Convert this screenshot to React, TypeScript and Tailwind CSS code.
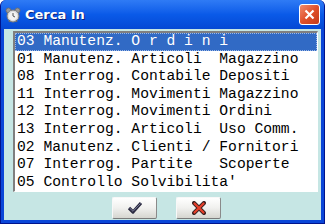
import React from 'react';

const rows = [
  '03 Manutenz. O r d i n i',
  '01 Manutenz. Articoli  Magazzino',
  '08 Interrog. Contabile Depositi',
  '11 Interrog. Movimenti Magazzino',
  '12 Interrog. Movimenti Ordini',
  '13 Interrog. Articoli  Uso Comm.',
  '02 Manutenz. Clienti / Fornitori',
  '07 Interrog. Partite   Scoperte',
  "05 Controllo Solvibilita'",
];

const ClockIcon = () => (
  <svg width="16" height="16" viewBox="0 0 16 16">
    <circle cx="3.5" cy="3.5" r="2.5" fill="#9a9a9a" stroke="#6b6b6b" strokeWidth="0.8" />
    <circle cx="12.5" cy="3.5" r="2.5" fill="#9a9a9a" stroke="#6b6b6b" strokeWidth="0.8" />
    <circle cx="8" cy="9" r="6" fill="#d8d8d8" stroke="#7a7a7a" strokeWidth="1" />
    <circle cx="8" cy="9" r="4.3" fill="#f2f2f2" />
    <path d="M8 9 L8 6 M8 9 L10 10" stroke="#555" strokeWidth="1" fill="none" />
    <path d="M4 15 L5 13 M12 15 L11 13" stroke="#6b6b6b" strokeWidth="1.2" />
  </svg>
);

const CheckIcon = () => (
  <svg width="16" height="14" viewBox="0 0 16 14">
    <path d="M2 7 L6 11 L14 2" stroke="#2a2a40" strokeWidth="3.2" fill="none" strokeLinejoin="round" />
    <path d="M2.5 7 L6 10.3 L13.5 2.5" stroke="#7a7c98" strokeWidth="1" fill="none" />
  </svg>
);

const CrossIcon = () => (
  <svg width="14" height="14" viewBox="0 0 14 14">
    <path d="M2 2 L12 12 M12 2 L2 12" stroke="#3a2020" strokeWidth="4" strokeLinecap="round" />
    <path d="M2.5 2.5 L11.5 11.5 M11.5 2.5 L2.5 11.5" stroke="#e8402a" strokeWidth="2.2" strokeLinecap="round" />
  </svg>
);

export default function App() {
  return (
    <div className="w-[325px] h-[224px] bg-[#0a46d8] flex flex-col overflow-hidden rounded-t-[6px] border-l border-r border-b border-[#00138c]">
      {/* title bar */}
      <div className="h-[29px] shrink-0 flex items-center pl-[4px] pr-[4px] bg-gradient-to-b from-[#2f7bf5] via-[#0a5ae8] to-[#0548d4]">
        <ClockIcon />
        <span
          className="ml-[4px] text-white font-bold text-[13px] [text-shadow:1px_1px_0_#0a1f7a]"
          style={{ fontFamily: '"DejaVu Sans", "Liberation Sans", sans-serif' }}
        >
          Cerca In
        </span>
        <div className="ml-auto w-[21px] h-[21px] rounded-[3px] border border-white bg-gradient-to-br from-[#f08a6a] via-[#e0502a] to-[#c43a1a] flex items-center justify-center">
          <svg width="11" height="11" viewBox="0 0 11 11">
            <path d="M1.5 1.5 L9.5 9.5 M9.5 1.5 L1.5 9.5" stroke="white" strokeWidth="2.2" />
          </svg>
        </div>
      </div>

      {/* client */}
      <div className="flex-1 mx-[3px] mb-[3px] bg-[#c6e6e4] flex flex-col pt-[2px] pl-[9px] pr-[4px]">
        <div className="w-[305px] border-t-2 border-l-2 border-t-[#7f7f7f] border-l-[#7f7f7f] border-b border-r border-b-white border-r-white bg-white">
          {rows.map((r, i) => (
            <div
              key={i}
              className={`h-[17.6px] leading-[17.6px] pl-[2px] whitespace-pre text-[14.67px] ${
                i === 0 ? 'bg-[#316ac5] text-white outline-1 outline-dotted outline-[#9cb8e6] -outline-offset-1' : 'text-black'
              }`}
              style={{ fontFamily: '"Liberation Mono", "Courier New", monospace' }}
            >
              {r}
            </div>
          ))}
        </div>
        <div className="flex justify-center gap-[19px] mt-[5px] pl-[3px]">
          <button className="w-[45px] h-[22px] flex items-center justify-center bg-gradient-to-b from-[#ffffff] via-[#f0f0ee] to-[#d6d6d0] border border-[#f8f8f8] border-r-[#8a8a8a] border-b-[#7a7a7a] rounded-[2px]">
            <CheckIcon />
          </button>
          <button className="w-[45px] h-[22px] flex items-center justify-center bg-gradient-to-b from-[#ffffff] via-[#f0f0ee] to-[#d6d6d0] border border-[#f8f8f8] border-r-[#8a8a8a] border-b-[#7a7a7a] rounded-[2px]">
            <CrossIcon />
          </button>
        </div>
      </div>
    </div>
  );
}
